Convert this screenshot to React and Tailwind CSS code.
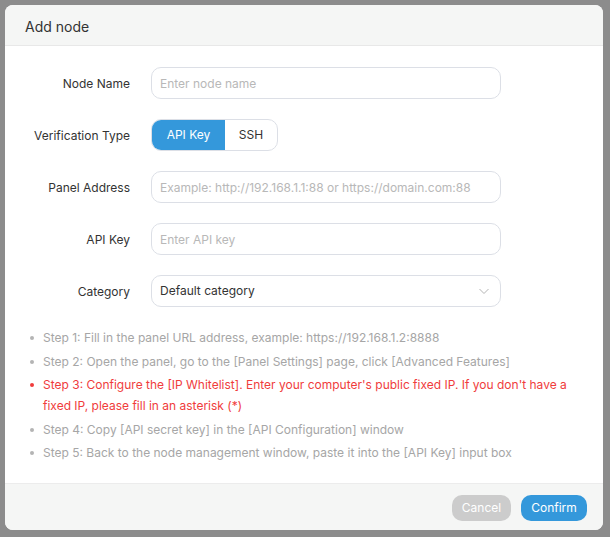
import { useState } from 'react';

const steps = [
    { text: 'Step 1: Fill in the panel URL address, example: https://192.168.1.2:8888' },
    { text: 'Step 2: Open the panel, go to the [Panel Settings] page, click [Advanced Features]' },
    {
        text: "Step 3: Configure the [IP Whitelist]. Enter your computer's public fixed IP. If you don't have a fixed IP, please fill in an asterisk (*)",
        warn: true,
    },
    { text: 'Step 4: Copy [API secret key] in the [API Configuration] window' },
    { text: 'Step 5: Back to the node management window, paste it into the [API Key] input box' },
];

const Field = ({ label, children }) => (
    <div className="flex items-center h-[32px]">
        <label className="w-[125px] text-right text-[12px] text-[#333] pt-[1px]">{label}</label>
        <div className="ml-[21px] w-[350px]">{children}</div>
    </div>
);

const TextInput = ({ placeholder }) => (
    <input
        className="w-full h-[32px] rounded-[10px] border border-[#dcdfe6] px-[8px] text-[12px] text-[#333] placeholder:text-[#b8b8b8] outline-none"
        placeholder={placeholder}
    />
);

export default function App() {
    const [mode, setMode] = useState('api');

    return (
        <div className="w-[610px] h-[537px] bg-[#8c8c8c] pt-[5px] pl-[5px]" style={{ fontFamily: 'Inter, "Liberation Sans", sans-serif' }}>
            <div className="w-[598px] h-[525px] bg-white rounded-[8px] overflow-hidden flex flex-col">
                <div className="h-[41px] bg-[#f5f6f5] border-b border-[#e8e8e8] flex items-center pl-[20px] pt-[2px] text-[14px] text-[#333]">
                    Add node
                </div>

                <div className="flex-1 pt-[21px]">
                    <div className="flex flex-col gap-[20px]">
                        <Field label="Node Name">
                            <TextInput placeholder="Enter node name" />
                        </Field>
                        <Field label="Verification Type">
                            <div className="inline-flex h-[32px] rounded-[10px] border border-[#dcdfe6] overflow-hidden text-[12px]">
                                <button
                                    onClick={() => setMode('api')}
                                    className={mode === 'api' ? 'w-[73px] bg-[#3498db] text-white' : 'w-[73px] text-[#333]'}
                                >
                                    API Key
                                </button>
                                <button
                                    onClick={() => setMode('ssh')}
                                    className={mode === 'ssh' ? 'w-[52px] bg-[#3498db] text-white' : 'w-[52px] text-[#333]'}
                                >
                                    SSH
                                </button>
                            </div>
                        </Field>
                        <Field label="Panel Address">
                            <TextInput placeholder="Example: http://192.168.1.1:88 or https://domain.com:88" />
                        </Field>
                        <Field label="API Key">
                            <TextInput placeholder="Enter API key" />
                        </Field>
                        <Field label="Category">
                            <div className="h-[32px] rounded-[10px] border border-[#dcdfe6] flex items-center justify-between pl-[8px] pr-[10px] text-[12px] text-[#333]">
                                <span>Default category</span>
                                <svg width="12" height="12" viewBox="0 0 12 12" fill="none" stroke="#b4b4b4" strokeWidth="1">
                                    <path d="M1.5 4l4.5 4.5 4.5-4.5" />
                                </svg>
                            </div>
                        </Field>
                    </div>

                    <ul className="mt-[20px] pl-[25px] pr-[20px] flex flex-col gap-[2.5px] text-[12px] leading-[21px]">
                        {steps.map((s, i) => (
                            <li key={i} className={`flex ${s.warn ? 'text-[#f03c3c]' : 'text-[#a6a6a6]'}`}>
                                <span className="w-[13px] shrink-0 flex justify-start pt-[9px]">
                                    <span className={`block w-[4px] h-[4px] rounded-full ${s.warn ? 'bg-[#f03c3c]' : 'bg-[#b4b4b4]'}`} />
                                </span>
                                <span>{s.text}</span>
                            </li>
                        ))}
                    </ul>
                </div>

                <div className="h-[47px] bg-[#f5f6f5] border-t border-[#ececec] flex items-center justify-end gap-[10px] pr-[16px] pt-[1px]">
                    <button className="h-[26px] w-[59px] rounded-[10px] bg-[#cccccc] text-white text-[12px]">Cancel</button>
                    <button className="h-[26px] w-[66px] rounded-[10px] bg-[#3498db] text-white text-[12px]">Confirm</button>
                </div>
            </div>
        </div>
    );
}
